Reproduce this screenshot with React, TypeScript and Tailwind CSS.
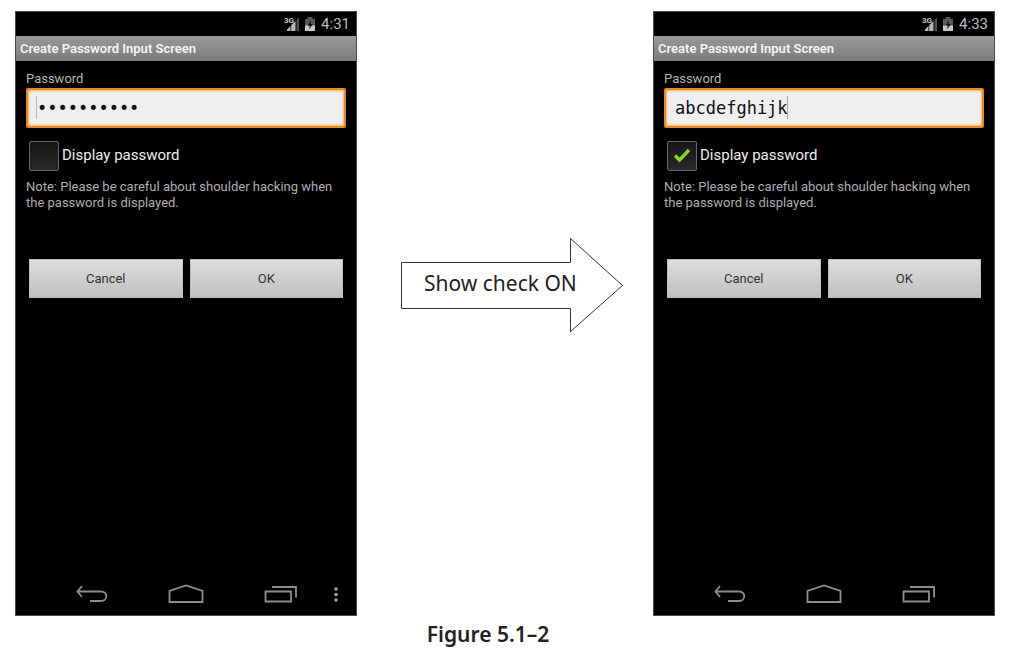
import { useId, useState } from "react";

type PhoneProps = {
  time: string;
  initialPassword: string;
  initiallyShown: boolean;
  hasMenu?: boolean;
};

function StatusIcons() {
  return (
    <svg width="32" height="18" viewBox="0 0 32 18" aria-hidden="true">
      <text x="0" y="8" fill="#c4c4c4" fontSize="8" fontWeight="700" fontFamily="Roboto, sans-serif">3G</text>
      <path d="M3 16 V14.500 L6.500 11 V16 Z" fill="#b8b8b8" />
      <path d="M7.200 16 V10 L11.500 6 V16 Z" fill="#b8b8b8" />
      <path d="M12.500 16 V5 L15 2.500 V16 Z" fill="#505050" />
      <path d="M21 4 H23.500 V2 H28.500 V4 H31 V16 H21 Z" fill="#5a5a5a" />
      <path d="M21 10.500 H31 V16 H21 Z" fill="#c8c8c8" />
      <path d="M27 5 L23.500 10.500 H25.800 L25 14.500 L29 9 H26.700 Z" fill="#161616" />
    </svg>
  );
}

function BackIcon() {
  return (
    <svg width="32" height="20" viewBox="0 0 32 20" fill="none" stroke="#8d8d8d" strokeWidth="1.800" aria-hidden="true">
      <path d="M6 2 L1.500 7.500 L6 13" />
      <path d="M1.500 7.500 H25 C32 7.500 32 17 25 17 H14" />
    </svg>
  );
}

function HomeIcon() {
  return (
    <svg width="36" height="20" viewBox="0 0 36 20" fill="none" stroke="#8d8d8d" strokeWidth="1.800" aria-hidden="true">
      <path d="M1.500 18 V7 L18 1.500 L34.500 7 V18 Z" />
    </svg>
  );
}

function RecentIcon() {
  return (
    <svg width="34" height="20" viewBox="0 0 34 20" fill="none" stroke="#8d8d8d" strokeWidth="1.800" aria-hidden="true">
      <path d="M1.500 7.500 H27 V17.500 H1.500 Z" />
      <path d="M8 3 H32 V13.500" />
    </svg>
  );
}

function Phone({ time, initialPassword, initiallyShown, hasMenu = false }: PhoneProps) {
  const [password, setPassword] = useState(initialPassword);
  const [shown, setShown] = useState(initiallyShown);
  const id = useId();

  return (
    <section className="flex min-w-0 flex-col border border-[#4a4a4a] bg-black font-['Roboto',sans-serif]">
      <header className="flex h-6 items-center justify-end gap-[5px] pr-[6px]">
        <StatusIcons />
        <time className="text-[15px] leading-6 text-[#bcbcbc]">{time}</time>
      </header>
      <h1 className="h-[25px] bg-linear-to-b from-[#999] to-[#7c7c7c] pl-1 text-[13px] leading-[25px] font-semibold text-[#f5f5f5]">
        Create Password Input Screen
      </h1>
      <form className="flex flex-col px-[10px] pt-[10px]" onSubmit={(e) => e.preventDefault()}>
        <label htmlFor={id + "password"} className="text-[13px] leading-4 text-[#b5b5b5]">
          Password
        </label>
        <div className="relative mt-px font-['DejaVu_Sans_Mono',monospace] text-[17px]">
          <input
            id={id + "password"}
            type={shown ? "text" : "password"}
            value={password}
            onChange={(e) => setPassword(e.target.value)}
            className="block h-10 w-full rounded-xs border-2 border-[#e8862a] bg-[#efefef] px-[9px] text-[#111] shadow-[inset_0_0_2px_1px_#f5b26b] outline-none"
          />
          <span
            aria-hidden="true"
            className={
              shown
                ? "absolute top-2 left-[123px] h-[23px] w-px bg-[#aaa]"
                : "absolute top-2 left-[10px] h-[23px] w-px bg-[#bbb]"
            }
          />
        </div>
        <label className="mt-3 flex h-[31px] items-center gap-[3px] pl-[3px] text-[15px] text-[#ededed]">
          <span className="relative grid size-[30px] place-items-center">
            <input
              type="checkbox"
              checked={shown}
              onChange={(e) => setShown(e.target.checked)}
              className="size-[30px] appearance-none rounded-xs border border-[#666] bg-linear-to-b from-[#171717] to-[#292929]"
            />
            {shown && (
              <svg className="pointer-events-none absolute" width="20" height="20" viewBox="0 0 20 20" fill="none" aria-hidden="true">
                <path d="M3 9.500 L7.500 14 L17 4" stroke="#85d52b" strokeWidth="3.400" />
              </svg>
            )}
          </span>
          Display password
        </label>
        <p className="mt-2 text-[13px] leading-4 text-[#adadad]">
          Note: Please be careful about shoulder hacking when the password is displayed.
        </p>
        <div className="mt-12 grid grid-cols-2 gap-[7px] px-[3px] text-[13px] text-[#333]">
          <button type="button" className="h-[39px] border border-[#bdbdbd] bg-linear-to-b from-[#dedede] to-[#c0c0c0]">
            Cancel
          </button>
          <button type="submit" className="h-[39px] border border-[#bdbdbd] bg-linear-to-b from-[#dedede] to-[#c0c0c0]">
            OK
          </button>
        </div>
      </form>
      <nav className="mt-auto flex h-[43px] items-center">
        <div className="flex flex-1 items-center justify-between pl-[60px]">
          <button type="button" aria-label="Back"><BackIcon /></button>
          <button type="button" aria-label="Home"><HomeIcon /></button>
          <button type="button" aria-label="Recent apps"><RecentIcon /></button>
        </div>
        <div className="flex w-[58px] justify-end pr-[17px]">
          {hasMenu && (
            <button type="button" aria-label="More options">
              <svg width="6" height="18" viewBox="0 0 6 18" fill="#a0a0a0" aria-hidden="true">
                <circle cx="3" cy="4" r="1.800" />
                <circle cx="3" cy="9.500" r="1.800" />
                <circle cx="3" cy="15" r="1.800" />
              </svg>
            </button>
          )}
        </div>
      </nav>
    </section>
  );
}

export default function App() {
  return (
    <main className="min-h-screen bg-white px-[15px] pt-[11px] font-['Noto_Sans',sans-serif]">
      <figure>
        <div className="grid min-h-[605px] grid-cols-[1fr_296px_1fr]">
          <Phone time="4:31" initialPassword="abcdefghij" initiallyShown={false} hasMenu />
          <div className="flex justify-center pt-[226px] pl-[14px]">
            <div className="relative h-24 w-[224px]">
              <svg width="224" height="96" viewBox="0 0 224 96" fill="white" stroke="#333" aria-hidden="true">
                <path d="M1.500 25.500 H170.500 V1.500 L222.500 48.500 L170.500 94.500 V71.500 H1.500 Z" />
              </svg>
              <span className="absolute inset-y-0 left-6 flex items-center pb-1 text-[21px] leading-6 whitespace-nowrap text-[#222]">
                Show check ON
              </span>
            </div>
          </div>
          <Phone time="4:33" initialPassword="abcdefghijk" initiallyShown />
        </div>
        <figcaption className="mt-1 pr-[34px] text-center text-[21px] leading-7 font-semibold text-[#222]">
          Figure 5.1–2
        </figcaption>
      </figure>
    </main>
  );
}
